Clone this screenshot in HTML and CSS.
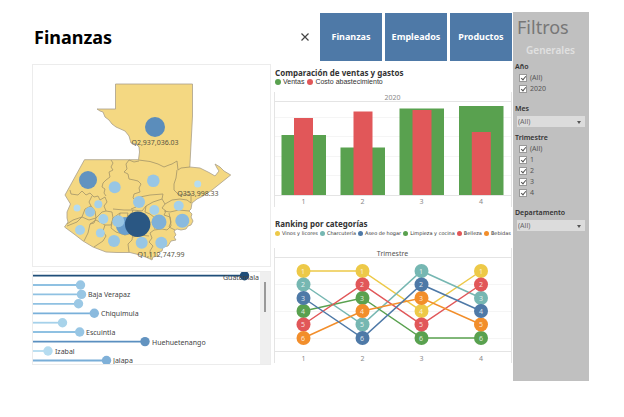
FILE: index.html
```html
<!DOCTYPE html>
<html lang="es">
<head>
<meta charset="utf-8">
<title>Finanzas</title>
<link rel="stylesheet" href="styles.css">
</head>
<body>
<div class="page">
  <main class="content">
    <header class="header">
      <h1 class="title">Finanzas</h1>
      <button class="close" type="button" aria-label="Cerrar">
        <svg width="8" height="8" viewBox="0 0 8 8"><path d="M0.5 0.5L7.5 7.5M7.5 0.5L0.5 7.5"/></svg>
      </button>
      <nav class="nav">
        <a href="#finanzas">Finanzas</a>
        <a href="#empleados">Empleados</a>
        <a href="#productos">Productos</a>
      </nav>
    </header>

    <div class="columns">
      <div class="column left">
        <section class="panel">
          <svg class="chart" viewBox="33 65 237 201">
            <g class="land">
              <path d="M115.5 84H192.5V116L189.8 167L200 168L209 172.5L215 176L219 171L217 168L215 164L220 167L224 171L230.7 175L222 182L212 190L203 196L197 199L192 203L191 209L189 211L192 214L191 217L193 221L191 225L188 226L186 229L181 230L177 229L174 231L176 235L174 237L176 240L171 241L168 246L163 247L162 251L157 253L158 256L153 257L152 260L148 258L140 255L130 252.5H117L106 252L93 247L83 241L74 234L64.5 227L68 222L67 218L67 212L70.5 204L65 195L84.5 159.7H138.5L139.5 152L139 147L136 144L131 143L129 136L125 131L116 127L112 124L109 120L105 117L103 112L100 111L97 109H115.5Z"/>
            </g>
            <g class="borders">
              <path d="M138.5 160L150 161.5L158 164L164 167L169 165L172 164L177 161L178 170L181 168L190 167"/>
              <path d="M111 160L113 163L111 167L113 170L109 172L110 177L106 180L103 183L102 187L105 189L104 193L106 196"/>
              <path d="M139 161L134 162L129 160L126 164L127 169L124 172L128 174L129 179L134 180L138 181L141 184L139 188L140 192L134 194L133 198L137 202L136 207L131 209"/>
              <path d="M70 190L71 194L78 195L82 191L86 195L90 193L94 197L98 196L100 200L105 197L107 202L104 206L106 211L112 212L113 218"/>
              <path d="M177 170L176 178L174 184L174 190L178 194L185 195L191 194L191 203"/>
              <path d="M140 197L150 195L163 194L162 199L153 202L146 206L142 211L133 210L124 210L113 209"/>
              <path d="M162 199L165 204L162 208L166 211L164 215L170 217L171 226L167 230L162 229L154 230L150 233L152 238L149 242L153 246L150 251L151 259"/>
              <path d="M165 204L172 200L180 199L187 200L191 203M164 211L170 212L179 210L189 211M169 213L171 222L169 227L175 230"/>
              <path d="M92 196L89 202L91 206L85 209L82 217L73 220L67 224M91 206L95 211L96 218L89 220L82 217M82 217L77 222L67 226"/>
              <path d="M96 218L102 212L106 211M96 218L94 223L90 224L88 233L84 241M90 224L96 220L105 225L111 225L113 218L120 213L128 213L127 218"/>
              <path d="M105 225L103 231L106 236L103 241L94 247M113 218L111 228L116 232L125 235L133 233L132 240L128 244L129 252M133 237L140 235L149 236"/>
              <path d="M146 206L145 212L150 214L155 218L152 222L155 229M133 210L131 216M120 213L118 229L125 235"/>
            </g>
            <g>
              <circle cx="155" cy="127" r="10" fill="#5b8dbb"/>
              <circle cx="88" cy="180" r="9" fill="#6293c0"/>
              <circle cx="125" cy="226" r="9" fill="#6a9fce"/>
              <circle cx="159" cy="222" r="7.5" fill="#7fb0d8"/>
              <circle cx="182.3" cy="220.7" r="7" fill="#8abade"/>
              <g fill="#98c6e4">
                <circle cx="114.7" cy="187.3" r="6"/><circle cx="139" cy="202" r="6"/>
                <circle cx="114" cy="241" r="6"/><circle cx="118.3" cy="221.3" r="6"/>
                <circle cx="141.7" cy="242.7" r="6"/><circle cx="153.3" cy="180.7" r="6.3"/>
                <circle cx="161.3" cy="242.7" r="6"/><circle cx="90" cy="212" r="5"/>
              </g>
              <g fill="#a4d0ea">
                <circle cx="103.3" cy="219" r="5"/><circle cx="80" cy="230" r="5"/>
                <circle cx="100.3" cy="233" r="4.5"/><circle cx="178.7" cy="205.7" r="5"/>
                <circle cx="154.3" cy="210" r="5"/><circle cx="98.3" cy="204.3" r="4"/>
              </g>
              <circle cx="77" cy="208" r="3.5" fill="#b5dcf0"/>
              <circle cx="197.7" cy="184" r="3.5" fill="#b5dcf0"/>
              <circle cx="137.7" cy="224.3" r="12.7" fill="#2a5783"/>
            </g>
            <g class="map-label">
              <text x="155" y="145">Q2,937,036.03</text>
              <text x="198" y="196">Q353,998.33</text>
              <text x="161" y="257">Q1,112,747.99</text>
            </g>
          </svg>
        </section>

        <section class="panel scroller">
          <svg class="chart" viewBox="33 272 227 92">
            <g class="stems">
              <path d="M33 275.7H244" stroke="#1f4e79"/>
              <path d="M33 285H80" stroke="#8fc1e2"/>
              <path d="M33 294.4H81" stroke="#8fc1e2"/>
              <path d="M33 303.8H78" stroke="#8fc1e2"/>
              <path d="M33 313.3H94" stroke="#79b0da"/>
              <path d="M33 322.7H62" stroke="#a5d1ea"/>
              <path d="M33 332H79" stroke="#8fc1e2"/>
              <path d="M33 341.6H145" stroke="#5a8fc0"/>
              <path d="M33 351H48" stroke="#b5dcf0"/>
              <path d="M33 360.5H106" stroke="#79aed8"/>
            </g>
            <circle cx="244.5" cy="275.7" r="4.7" fill="#1f4e79"/>
            <circle cx="80.5" cy="285" r="4.7" fill="#98c6e4"/>
            <circle cx="81.5" cy="294.4" r="4.7" fill="#98c6e4"/>
            <circle cx="78.5" cy="303.8" r="4.7" fill="#9bc8e5"/>
            <circle cx="94.3" cy="313.3" r="4.7" fill="#8abade"/>
            <circle cx="62.5" cy="322.7" r="4.7" fill="#a8d3ea"/>
            <circle cx="79.7" cy="332" r="4.7" fill="#98c6e4"/>
            <circle cx="145" cy="341.6" r="4.7" fill="#6293c0"/>
            <circle cx="48" cy="351" r="4.7" fill="#b5dcf0"/>
            <circle cx="106.5" cy="360.5" r="4.7" fill="#7fb0d8"/>
            <g class="row-label">
              <text x="259" y="280" text-anchor="end">Guatemala</text>
              <text x="88" y="297">Baja Verapaz</text>
              <text x="101" y="316">Chiquimula</text>
              <text x="86" y="335">Escuintla</text>
              <text x="152" y="345">Huehuetenango</text>
              <text x="55" y="354">Izabal</text>
              <text x="113" y="363">Jalapa</text>
            </g>
          </svg>
          <div class="track"><div class="thumb"></div></div>
        </section>
      </div>

      <div class="column right">
        <section class="card">
          <h2>Comparación de ventas y gastos</h2>
          <ul class="legend">
            <li><i class="dot green"></i>Ventas</li>
            <li><i class="dot red"></i>Costo abastecimiento</li>
          </ul>
          <svg class="chart" viewBox="273 92 239 115">
            <path class="grid" d="M274 117.5H511M274 136.5H511M274 156.5H511M274 175.5H511"/>
            <path class="frame" d="M274 101.5H511M274 195.5H511M274.5 92V207M511.5 92V207"/>
            <g fill="#59a14f">
              <rect x="281.5" y="135" width="44.5" height="60"/>
              <rect x="340.5" y="147.5" width="44.5" height="47.5"/>
              <rect x="399.5" y="108.5" width="44.5" height="86.5"/>
              <rect x="459" y="106" width="44.5" height="89"/>
            </g>
            <g fill="#e15759">
              <rect x="294" y="118" width="19" height="77"/>
              <rect x="353.5" y="111.5" width="19" height="83.5"/>
              <rect x="412.5" y="110" width="19" height="85"/>
              <rect x="471.8" y="132" width="19" height="63"/>
            </g>
            <g class="axis">
              <text x="392.5" y="100">2020</text>
              <text x="303.5" y="204">1</text><text x="362.5" y="204">2</text>
              <text x="421.5" y="204">3</text><text x="481" y="204">4</text>
            </g>
          </svg>
        </section>

        <section class="card">
          <h2>Ranking por categorías</h2>
          <ul class="legend small">
            <li><i class="dot yellow"></i>Vinos y licores</li>
            <li><i class="dot teal"></i>Charcutería</li>
            <li><i class="dot blue"></i>Aseo de hogar</li>
            <li><i class="dot green"></i>Limpieza y cocina</li>
            <li><i class="dot red"></i>Belleza</li>
            <li><i class="dot orange"></i>Bebidas</li>
          </ul>
          <svg class="chart" viewBox="273 248 239 115">
            <path class="grid" d="M274 284.5H511M274 311.5H511M274 338.5H511"/>
            <path class="frame" d="M274 257.5H511M274 351.5H511M274.5 248V363M511.5 248V363"/>
            <g class="lines">
              <path stroke="#edc948" d="M303.5 271H362.5L421.5 311L481 271"/>
              <path stroke="#76b7b2" d="M303.5 284.5L362.5 324.5L421.5 271L481 298"/>
              <path stroke="#59a14f" d="M303.5 311L362.5 298L421.5 338H481"/>
              <path stroke="#e15759" d="M303.5 324.5L362.5 284.5L421.5 324.5L481 284.5"/>
              <path stroke="#f28e2b" d="M303.5 338L362.5 311L421.5 298L481 324.5"/>
              <path stroke="#4e79a7" d="M303.5 298L362.5 338L421.5 284.5L481 311"/>
            </g>
            <g fill="#edc948"><circle cx="303.5" cy="271" r="7"/><circle cx="362.5" cy="271" r="7"/><circle cx="421.5" cy="311" r="7"/><circle cx="481" cy="271" r="7"/></g>
            <g fill="#76b7b2"><circle cx="303.5" cy="284.5" r="7"/><circle cx="362.5" cy="324.5" r="7"/><circle cx="421.5" cy="271" r="7"/><circle cx="481" cy="298" r="7"/></g>
            <g fill="#59a14f"><circle cx="303.5" cy="311" r="7"/><circle cx="362.5" cy="298" r="7"/><circle cx="421.5" cy="338" r="7"/><circle cx="481" cy="338" r="7"/></g>
            <g fill="#e15759"><circle cx="303.5" cy="324.5" r="7"/><circle cx="362.5" cy="284.5" r="7"/><circle cx="421.5" cy="324.5" r="7"/><circle cx="481" cy="284.5" r="7"/></g>
            <g fill="#f28e2b"><circle cx="303.5" cy="338" r="7"/><circle cx="362.5" cy="311" r="7"/><circle cx="421.5" cy="298" r="7"/><circle cx="481" cy="324.5" r="7"/></g>
            <g fill="#4e79a7"><circle cx="303.5" cy="298" r="7"/><circle cx="362.5" cy="338" r="7"/><circle cx="421.5" cy="284.5" r="7"/><circle cx="481" cy="311" r="7"/></g>
            <g class="rank">
              <text x="303" y="274">1</text><text x="303" y="287">2</text><text x="303" y="301">3</text><text x="303" y="314">4</text><text x="303" y="327">5</text><text x="303" y="341">6</text>
              <text x="362" y="274">1</text><text x="362" y="287">2</text><text x="362" y="301">3</text><text x="362" y="314">4</text><text x="362" y="327">5</text><text x="362" y="341">6</text>
              <text x="421" y="274">1</text><text x="421" y="287">2</text><text x="421" y="301">3</text><text x="421" y="314">4</text><text x="421" y="327">5</text><text x="421" y="341">6</text>
              <text x="481" y="274">1</text><text x="481" y="287">2</text><text x="481" y="301">3</text><text x="481" y="314">4</text><text x="481" y="327">5</text><text x="481" y="341">6</text>
            </g>
            <g class="axis">
              <text class="dark" x="392.5" y="256">Trimestre</text>
              <text x="303.5" y="361">1</text><text x="362.5" y="361">2</text>
              <text x="421.5" y="361">3</text><text x="481" y="361">4</text>
            </g>
          </svg>
        </section>
      </div>
    </div>
  </main>

  <aside class="filters">
    <h2 class="filters-title">Filtros</h2>
    <p class="filters-group">Generales</p>
    <fieldset>
      <legend>Año</legend>
      <label class="check"><input type="checkbox" checked>(All)</label>
      <label class="check"><input type="checkbox" checked>2020</label>
    </fieldset>
    <div class="field">
      <label for="mes">Mes</label>
      <div class="select"><select id="mes"><option>(All)</option></select></div>
    </div>
    <fieldset>
      <legend>Trimestre</legend>
      <label class="check"><input type="checkbox" checked>(All)</label>
      <label class="check"><input type="checkbox" checked>1</label>
      <label class="check"><input type="checkbox" checked>2</label>
      <label class="check"><input type="checkbox" checked>3</label>
      <label class="check"><input type="checkbox" checked>4</label>
    </fieldset>
    <div class="field">
      <label for="departamento">Departamento</label>
      <div class="select"><select id="departamento"><option>(All)</option></select></div>
    </div>
  </aside>
</div>
</body>
</html>
```
FILE: styles.css
```css
* { box-sizing: border-box; }

body {
  margin: 0;
  background: #fff;
  color: #333;
  font: 7px/10px "Noto Sans", "Open Sans", sans-serif;
}

h1, h2, p, ul, fieldset, legend { margin: 0; padding: 0; border: 0; }

.page {
  display: flex;
  gap: 1px;
  padding: 12px 35px 36px 32px;
}

.content { flex: 1; min-width: 0; padding-bottom: 16px; }

.header {
  display: flex;
  align-items: center;
  padding-top: 1px;
  margin-bottom: 3px;
}

.title {
  flex: 1;
  padding-left: 2px;
  font-size: 18px;
  line-height: 24px;
  color: #000;
}

.close {
  display: flex;
  padding: 0;
  margin-right: 11px;
  border: 0;
  background: none;
}

.close svg { stroke: #444; stroke-width: 1.2; }

.nav {
  display: grid;
  grid-template-columns: repeat(3, 1fr);
  gap: 3px;
  width: 40%;
}

.nav a {
  padding: 18px 0;
  background: #4e79a7;
  color: #fff;
  font-size: 9px;
  font-weight: 700;
  line-height: 12px;
  text-align: center;
  text-decoration: none;
}

.columns {
  display: grid;
  grid-template-columns: 1fr 1fr;
  gap: 2px;
}

.column { min-width: 0; }

.chart { display: block; width: 100%; height: auto; }

.panel { border: 1px solid #ececec; }

.panel + .panel { margin-top: 4px; }

.scroller { display: flex; }

.scroller .chart { flex: 1; min-width: 0; }

.track {
  width: 10px;
  padding: 10px 0 0 4px;
  background: #efefef;
}

.thumb {
  width: 2px;
  height: 30px;
  background: #999;
}

.land { fill: #f4d882; stroke: #a9a08a; stroke-width: 0.8; }

.borders { fill: none; stroke: #a39468; stroke-width: 0.8; stroke-linejoin: round; }

.map-label { fill: #57533f; font-size: 7px; text-anchor: middle; }

.row-label { fill: #444; font-size: 7px; }

.stems { stroke-width: 1.8; }

.card { padding-top: 3px; }

.card + .card { margin-top: 8px; }

.card h2 {
  padding-left: 2px;
  font-size: 8px;
  font-weight: 700;
  line-height: 11px;
}

.legend {
  display: flex;
  gap: 3px;
  padding-left: 2px;
  margin-bottom: 6px;
  list-style: none;
  font: 7px/8px "Liberation Sans", sans-serif;
  white-space: nowrap;
}

.legend.small {
  gap: 2px;
  margin-bottom: 11px;
  font: 5px/8px "DejaVu Sans", sans-serif;
}

.legend li { display: flex; align-items: center; gap: 2px; }

.dot { width: 6px; height: 6px; border-radius: 50%; }

.small .dot { width: 5px; height: 5px; }

.green { background: #59a14f; }
.red { background: #e15759; }
.yellow { background: #edc948; }
.teal { background: #76b7b2; }
.blue { background: #4e79a7; }
.orange { background: #f28e2b; }

.grid { fill: none; stroke: #f5f5f5; }

.frame { fill: none; stroke: #e4e4e4; }

.axis { fill: #8a8a8a; font-size: 7px; text-anchor: middle; }

.axis .dark { fill: #555; }

.lines { fill: none; stroke-width: 1.5; }

.rank { fill: #fff; fill-opacity: 0.8; font-size: 7px; text-anchor: middle; }

.filters {
  flex: 0 0 76px;
  padding: 3px 3px 0 2px;
  background: #c0c0c0;
}

.filters-title {
  padding-left: 2px;
  color: #777;
  font-size: 18px;
  font-weight: 400;
  line-height: 24px;
}

.filters-group {
  padding: 4px 0 5px;
  color: #e0e0e0;
  font-size: 10px;
  font-weight: 600;
  line-height: 14px;
  text-align: center;
}

.filters legend, .field > label {
  display: block;
  font-size: 7px;
  font-weight: 600;
  line-height: 10px;
}

.check {
  display: flex;
  align-items: center;
  gap: 3px;
  height: 11px;
  padding-left: 4px;
  color: #555;
}

.check input {
  appearance: none;
  display: grid;
  place-items: center;
  width: 8px;
  height: 8px;
  margin: 0;
  border: 1px solid #999;
  background: #fff;
}

.check input:checked::after {
  content: "";
  width: 2px;
  height: 4px;
  border: solid #555;
  border-width: 0 1px 1px 0;
  transform: rotate(40deg);
}

.field { margin: 10px 0 6px; }

.select { position: relative; margin: 2px 1px 0 2px; }

.select::after {
  content: "";
  position: absolute;
  top: 5px;
  right: 4px;
  border: 2px solid transparent;
  border-top: 3px solid #555;
  pointer-events: none;
}

.select select {
  appearance: none;
  display: block;
  width: 100%;
  height: 11px;
  padding: 0 1px;
  border: 0;
  border-radius: 0;
  background: #dcdcdc;
  color: #666;
  font: inherit;
}
```
